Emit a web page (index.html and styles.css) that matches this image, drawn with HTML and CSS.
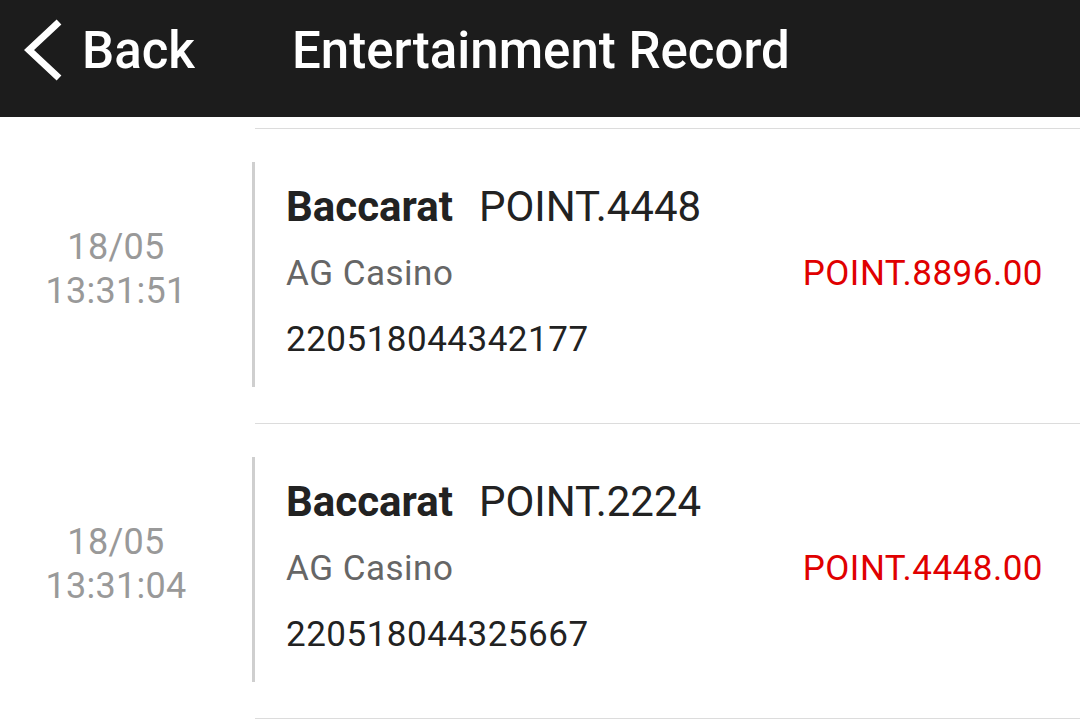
FILE: index.html
```html
<!DOCTYPE html>
<html lang="en">
<head>
    <meta charset="UTF-8">
    <meta name="viewport" content="width=device-width, initial-scale=1.0">
    <title>Entertainment Record</title>
    <link rel="stylesheet" href="styles.css">
</head>
<body>
    <div class="header">
        <a class="back" href="#">
            <svg class="back-icon" width="40" height="64" viewBox="0 0 40 64">
                <polyline points="35,4 5,32 35,60" fill="none" stroke="#fff" stroke-width="7" stroke-linecap="butt" stroke-linejoin="miter"/>
            </svg>
            <span>Back</span>
        </a>
        <h1 class="title">Entertainment Record</h1>
    </div>

    <div class="list">
        <div class="divider"></div>
        <div class="record">
            <div class="time">18/05<br>13:31:51</div>
            <div class="detail">
                <div class="game"><b>Baccarat</b>POINT.4448</div>
                <div class="row">
                    <span class="vendor">AG Casino</span>
                    <span class="amount">POINT.8896.00</span>
                </div>
                <div class="order">220518044342177</div>
            </div>
        </div>
        <div class="divider"></div>
        <div class="record">
            <div class="time">18/05<br>13:31:04</div>
            <div class="detail">
                <div class="game"><b>Baccarat</b>POINT.2224</div>
                <div class="row">
                    <span class="vendor">AG Casino</span>
                    <span class="amount">POINT.4448.00</span>
                </div>
                <div class="order">220518044325667</div>
            </div>
        </div>
        <div class="divider"></div>
    </div>
</body>
</html>
```

FILE: styles.css
```css
body {
    margin: 0;
    background: #fff;
    font-family: Roboto, "Noto Sans", Arial, sans-serif;
    color: #222;
}

.header {
    height: 117px;
    padding-bottom: 17px;
    box-sizing: border-box;
    background: #1c1c1c;
    display: flex;
    align-items: center;
    color: #fff;
}

.back {
    display: flex;
    align-items: center;
    color: #fff;
    text-decoration: none;
    font-size: 51px;
    font-weight: 500;
    padding-left: 24px;
    width: 292px;
    box-sizing: border-box;
}

.back-icon {
    margin-right: 18px;
}

.title {
    margin: 0;
    font-size: 51px;
    font-weight: 500;
}

.list {
    padding-top: 11px;
}

.divider {
    height: 1px;
    background: #dcdcdc;
    margin-left: 255px;
}

.record {
    display: flex;
    padding: 33px 0 36px;
}

.time {
    width: 252px;
    padding-right: 20px;
    box-sizing: border-box;
    align-self: center;
    margin-bottom: 11px;
    text-align: center;
    font-size: 36px;
    letter-spacing: 0.3px;
    line-height: 44px;
    color: #999;
}

.detail {
    flex: 1;
    border-left: 3px solid #cfcfcf;
    padding: 19px 37px 25px 31px;
}

.game {
    font-size: 42px;
    line-height: 52px;
    color: #222;
}

.game b {
    font-weight: 700;
    margin-right: 26px;
}

.row {
    display: flex;
    justify-content: space-between;
    margin-top: 19px;
    font-size: 35px;
    letter-spacing: 0.5px;
    line-height: 44px;
}

.vendor {
    color: #666;
}

.amount {
    color: #e00000;
}

.order {
    margin-top: 22px;
    font-size: 35px;
    letter-spacing: 0.5px;
    line-height: 44px;
    color: #222;
}
```
